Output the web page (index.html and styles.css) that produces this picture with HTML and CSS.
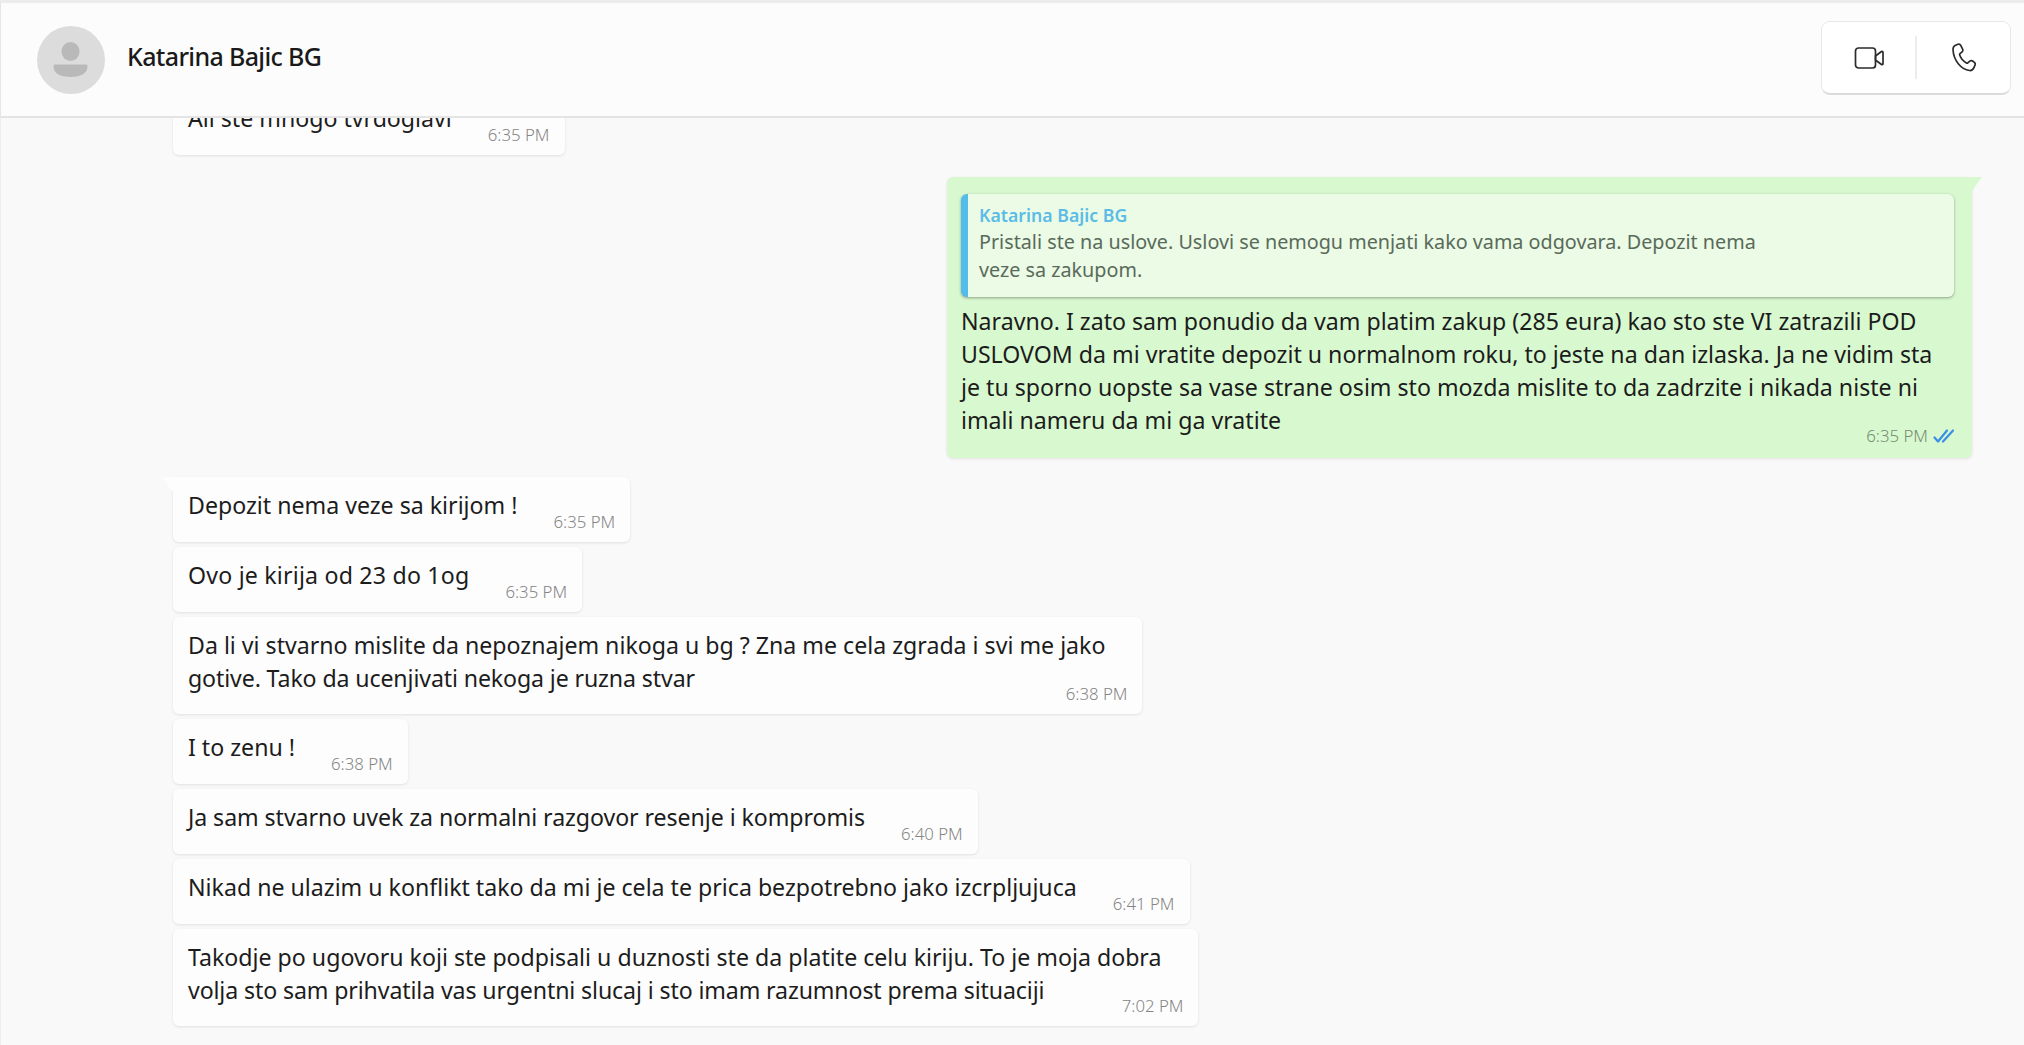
FILE: index.html
```html
<!DOCTYPE html>
<html lang="sr">
<head>
<meta charset="utf-8">
<title>Katarina Bajic BG</title>
<link rel="stylesheet" href="styles.css">
</head>
<body>
<div class="app">
  <header class="header">
    <div class="avatar">
      <svg width="68" height="68" viewBox="0 0 68 68"><circle cx="34" cy="34" r="34" fill="#dcdcdc"/><ellipse cx="33.5" cy="25.5" rx="9" ry="9.5" fill="#b9b9b9"/><path d="M18 38.500h31c1 0 1.500.5 1.500 1.500 0 7-6 11-17 11s-17-4-17-11c0-1 .5-1.500 1.500-1.500z" fill="#b9b9b9"/></svg>
    </div>
    <div class="name">Katarina Bajic BG</div>
    <div class="calls">
      <button class="call"><svg width="30" height="24" viewBox="0 0 30 24" fill="none" stroke="#2b2b2b" stroke-width="1.700" stroke-linejoin="round"><rect x="1.500" y="2" width="20" height="20" rx="3"/><path d="M21.500 10l6-4.500c.7-.5 1.500 0 1.500.8v11.400c0 .8-.8 1.300-1.500.8l-6-4.500z"/></svg></button>
      <span class="divider"></span>
      <button class="call"><svg width="24" height="30" viewBox="0 0 24 30" fill="none" stroke="#2b2b2b" stroke-width="1.700" stroke-linejoin="round"><path d="M3 2.500 6 1.200c1-.4 2-.1 2.600 1l2 4c.5 1 .3 1.900-.5 2.600L8 10.600c-.4.400-.5.900-.3 1.500 1.300 3.700 3.500 6.200 6.700 7.900.5.200 1 .2 1.400-.2l2-1.700c.9-.7 1.900-.7 2.800-.1l1.500 1.200c1.200.9 1.400 2 .8 3.100l-1 2.400c-.8 1.900-2.300 3-4.300 2.800C9 26.300 1.500 17.500 1 6.500c-.1-1.800.6-3.200 2-4z"/></svg></button>
    </div>
  </header>
  <main class="chat">
    <div class="msg in"><div class="row"><p class="text">Ali ste mnogo tvrdoglavi</p><span class="time">6:35 PM</span></div></div>
    <div class="msg out">
      <div class="quote">
        <div class="q-name">Katarina Bajic BG</div>
        <div class="q-text">Pristali ste na uslove. Uslovi se nemogu menjati kako vama odgovara. Depozit nema<br>veze sa zakupom.</div>
      </div>
      <p class="body">Naravno. I zato sam ponudio da vam platim zakup (285 eura) kao sto ste VI zatrazili POD<br>USLOVOM da mi vratite depozit u normalnom roku, to jeste na dan izlaska. Ja ne vidim sta<br>je tu sporno uopste sa vase strane osim sto mozda mislite to da zadrzite i nikada niste ni<br>imali nameru da mi ga vratite</p>
      <div class="meta"><span class="time">6:35 PM</span><svg class="ticks" width="21" height="14" viewBox="0 0 21 14" fill="none" stroke="#3a8ee6" stroke-width="2.200" stroke-linecap="round" stroke-linejoin="round"><path d="M1.500 8.500 5 12.500 14 1.500M10 12.500 20 1.500"/></svg></div>
    </div>
    <div class="msg in first"><div class="row"><p class="text">Depozit nema veze sa kirijom !</p><span class="time">6:35 PM</span></div></div>
    <div class="msg in"><div class="row"><p class="text wide">Ovo je kirija od 23 do 1og</p><span class="time">6:35 PM</span></div></div>
    <div class="msg in"><p class="body">Da li vi stvarno mislite da nepoznajem nikoga u bg ? Zna me cela zgrada i svi me jako<br><span class="tight">gotive. Tako da ucenjivati nekoga je ruzna stvar</span></p><div class="meta"><span class="time">6:38 PM</span></div></div>
    <div class="msg in"><div class="row"><p class="text">I to zenu !</p><span class="time">6:38 PM</span></div></div>
    <div class="msg in"><div class="row"><p class="text snug">Ja sam stvarno uvek za normalni razgovor resenje i kompromis</p><span class="time">6:40 PM</span></div></div>
    <div class="msg in"><div class="row"><p class="text">Nikad ne ulazim u konflikt tako da mi je cela te prica bezpotrebno jako izcrpljujuca</p><span class="time">6:41 PM</span></div></div>
    <div class="msg in"><p class="body">Takodje po ugovoru koji ste podpisali u duznosti ste da platite celu kiriju. To je moja dobra<br><span class="tight">volja sto sam prihvatila vas urgentni slucaj i sto imam razumnost prema situaciji</span></p><div class="meta"><span class="time">7:02 PM</span></div></div>
  </main>
</div>
</body>
</html>
```
FILE: styles.css
```css
* { box-sizing: border-box; }
html, body { margin: 0; height: 100%; overflow: hidden; }
body { font-family: "Noto Sans", "Open Sans", sans-serif; color: #1c1c1c; background: #f9f9f9; }
.app { height: 1045px; display: flex; flex-direction: column; border-top: 3px solid #ececec; }
.header { flex: none; height: 115px; display: flex; align-items: center; padding: 0 13px 0 36px; background: #fcfcfc; border-left: 1px solid #e6e6e6; border-bottom: 2px solid #e4e4e4; }
.avatar { width: 68px; height: 68px; }
.avatar svg { display: block; }
.name { margin-left: 22px; margin-bottom: 8px; font-size: 25px; font-weight: 500; letter-spacing: -.65px; color: #1a1a1a; }
.calls { margin-left: auto; margin-bottom: 3px; width: 190px; height: 74px; display: flex; align-items: center; background: #fff; border: 1px solid #e8e8e8; border-bottom: 2px solid #dadada; border-radius: 9px; }
.call { flex: 1; height: 100%; padding: 0; border: 0; background: none; display: flex; align-items: center; justify-content: center; }
.divider { width: 2px; height: 43px; background: #ececec; }
.chat { flex: 1; min-height: 0; overflow: hidden; display: flex; flex-direction: column; justify-content: flex-end; gap: 5px; padding: 0 52px 19px 172px; background: #f9f9f9; border-left: 1px solid #eeeeee; }
.msg { position: relative; align-self: flex-start; padding: 12px 15px 10px; background: #fdfdfd; border-radius: 6px; box-shadow: 0 1px 3px rgba(0,0,0,.1); }
.first { margin-top: 14px; border-top-left-radius: 0; }
.first::before { content: ""; position: absolute; left: -11px; top: 0; border-top: 15px solid #fdfdfd; border-left: 11px solid transparent; }
.row { display: flex; align-items: flex-end; gap: 36px; }
.text, .body { margin: 0; font-size: 23.150px; line-height: 33px; white-space: nowrap; }
.text { margin-bottom: 10px; }
.wide { letter-spacing: .2px; }
.snug { letter-spacing: -.065px; }
.tight { letter-spacing: -.12px; }
.in .body { margin-right: 22px; }
.time { font-size: 16.800px; line-height: 20px; font-weight: 300; color: #858585; white-space: nowrap; }
.meta { margin-top: -11px; display: flex; justify-content: flex-end; align-items: center; gap: 5px; }
.ticks { display: block; }
.out { align-self: flex-end; width: 1025px; margin: 17px 0 0; padding: 17px 18px 12px 14px; background: #d8f9cf; border-top-right-radius: 0; }
.out::after { content: ""; position: absolute; right: -10px; top: 0; border-top: 14px solid #d8f9cf; border-right: 10px solid transparent; }
.quote { height: 103px; margin-bottom: 8px; padding: 8px 16px 0 11px; background: #ebfbe6; border-left: 7px solid #53bce9; border-radius: 6px; box-shadow: 0 1px 3px rgba(0,0,0,.35); }
.q-name { font-size: 17.700px; line-height: 26px; font-weight: 600; color: #5bbce6; }
.q-text { font-size: 19.750px; line-height: 28px; color: #5a6a5a; white-space: nowrap; }
.out .time { color: #778c73; }
```
